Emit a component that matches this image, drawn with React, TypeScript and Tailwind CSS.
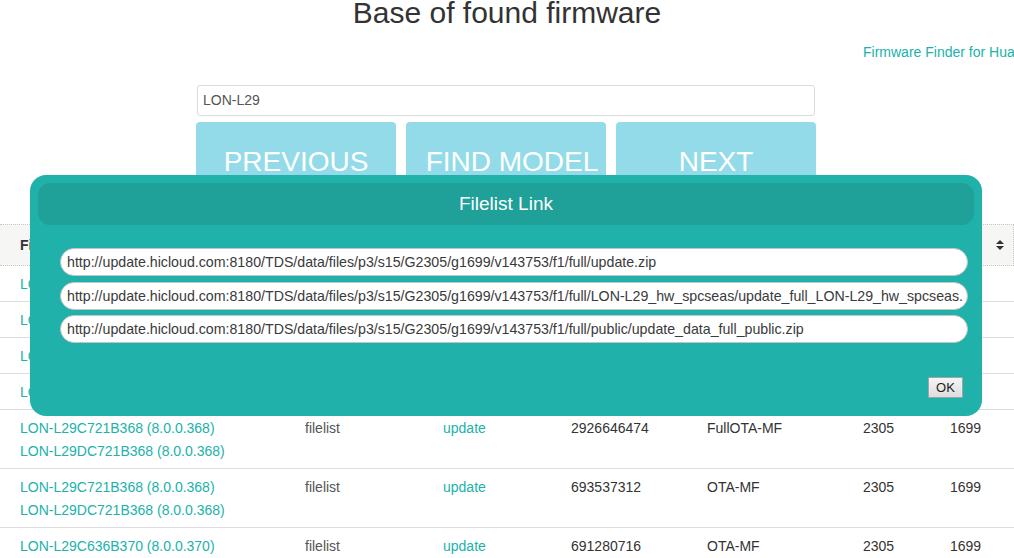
import React from "react";

type Row = {
  names: string[];
  size: string;
  type: string;
  g: string;
  v: string;
};

const rows: Row[] = [
  { names: ["LON-L29C432B370 (8.0.0.370)"], size: "3012451870", type: "FullOTA-MF", g: "2305", v: "1699" },
  { names: ["LON-L29C432B370 (8.0.0.370)"], size: "694213550", type: "OTA-MF", g: "2305", v: "1699" },
  { names: ["LON-L29C636B370 (8.0.0.370)"], size: "2926646474", type: "FullOTA-MF", g: "2305", v: "1699" },
  { names: ["LON-L29C636B368 (8.0.0.368)"], size: "693537312", type: "OTA-MF", g: "2305", v: "1699" },
  {
    names: ["LON-L29C721B368 (8.0.0.368)", "LON-L29DC721B368 (8.0.0.368)"],
    size: "2926646474",
    type: "FullOTA-MF",
    g: "2305",
    v: "1699",
  },
  {
    names: ["LON-L29C721B368 (8.0.0.368)", "LON-L29DC721B368 (8.0.0.368)"],
    size: "693537312",
    type: "OTA-MF",
    g: "2305",
    v: "1699",
  },
  { names: ["LON-L29C636B370 (8.0.0.370)"], size: "691280716", type: "OTA-MF", g: "2305", v: "1699" },
];

const links = [
  "http://update.hicloud.com:8180/TDS/data/files/p3/s15/G2305/g1699/v143753/f1/full/update.zip",
  "http://update.hicloud.com:8180/TDS/data/files/p3/s15/G2305/g1699/v143753/f1/full/LON-L29_hw_spcseas/update_full_LON-L29_hw_spcseas.zip",
  "http://update.hicloud.com:8180/TDS/data/files/p3/s15/G2305/g1699/v143753/f1/full/public/update_data_full_public.zip",
];

const cols = "grid grid-cols-[285px_138px_128px_136px_156px_87px_1fr] pl-[20px]";

function SortIcon() {
  return (
    <svg width="8" height="10" viewBox="0 0 8 10" className="block">
      <polygon points="0,4 4,0 8,4" fill="#333" />
      <polygon points="0,6 4,10 8,6" fill="#333" />
    </svg>
  );
}

export default function App() {
  return (
    <div className="relative w-[1014px] h-[558px] overflow-hidden bg-white text-[14px] text-[#333] font-['Liberation_Sans',Arial,sans-serif]">
      <h1 className="mt-[-2px] text-center text-[30px] leading-[30px] font-normal text-[#333]">
        Base of found firmware
      </h1>
      <div className="mt-[14px] h-[20px] pl-[863px] leading-[20px] whitespace-nowrap text-[14px] text-[#20b2aa]">
        Firmware Finder for Huawei
      </div>
      <div className="mt-[23px] ml-[197px] w-[618px] h-[31px] rounded-[3px] border border-[#dcdcdc] flex items-center px-[5px] text-[14px] text-[#555]">
        LON-L29
      </div>
      <div className="mt-[6px] ml-[196px] flex gap-[10px]">
        <div className="w-[200px] h-[78px] pt-[2px] rounded-[4px] bg-[#94dbea] text-white text-[28px] flex items-center justify-center">
          PREVIOUS
        </div>
        <div className="w-[200px] h-[78px] pt-[2px] pl-[12px] rounded-[4px] bg-[#94dbea] text-white text-[28px] flex items-center justify-center">
          FIND MODEL
        </div>
        <div className="w-[200px] h-[78px] pt-[2px] rounded-[4px] bg-[#94dbea] text-white text-[28px] flex items-center justify-center">
          NEXT
        </div>
      </div>

      {/* table */}
      <div className="mt-[24px]">
        <div className={`${cols} h-[42px] items-center bg-[#f6f6f4] border-y border-r border-dotted border-[#c8c8c8] font-bold`}>
          <div>Firmware</div>
          <div>Filelist</div>
          <div>Link</div>
          <div>Size</div>
          <div>Type</div>
          <div>G</div>
          <div className="flex items-center justify-between pr-[9px]">
            <span>V</span>
            <SortIcon />
          </div>
        </div>
        {rows.map((r, i) => (
          <div
            key={i}
            className={`${cols} border-b border-[#dddddd] ${
              r.names.length > 1 ? "pt-[8px] pb-[7px]" : "h-[36px] items-center"
            }`}
          >
            <div className="flex flex-col gap-[3px]">
              {r.names.map((n, j) => (
                <div key={j} className="leading-[20px] text-[#20b2aa]">
                  {n}
                </div>
              ))}
            </div>
            <div className="leading-[20px] text-[#555]">filelist</div>
            <div className="leading-[20px] text-[#20b2aa]">update</div>
            <div className="leading-[20px]">{r.size}</div>
            <div className="leading-[20px]">{r.type}</div>
            <div className="leading-[20px]">{r.g}</div>
            <div className="leading-[20px]">{r.v}</div>
          </div>
        ))}
      </div>

      {/* modal dialog */}
      <div className="absolute left-[30px] top-[175px] w-[952px] h-[241px] rounded-[16px] bg-[#20b2aa] p-[8px] flex flex-col">
        <div className="h-[42px] pt-[1px] rounded-[12px] bg-[#1fa099] flex items-center justify-center text-white text-[19px]">
          Filelist Link
        </div>
        <div className="mt-[23px] pl-[22px] pr-[6px] flex flex-col gap-[5.5px]">
          {links.map((l) => (
            <input
              key={l}
              readOnly
              value={l}
              className="h-[28px] w-full rounded-full bg-white border border-[#c4c4c4] pl-[6px] pr-[4px] text-[14.2px] text-[#3a3a3a] outline-none"
            />
          ))}
        </div>
        <div className="mt-[34px] flex justify-end pr-[11px]">
          <button className="w-[35px] h-[21px] border border-[#a3a3a3] bg-gradient-to-b from-[#f4f4f4] to-[#dedede] text-[13px] text-[#222] leading-[19px]">
            OK
          </button>
        </div>
      </div>
    </div>
  );
}
